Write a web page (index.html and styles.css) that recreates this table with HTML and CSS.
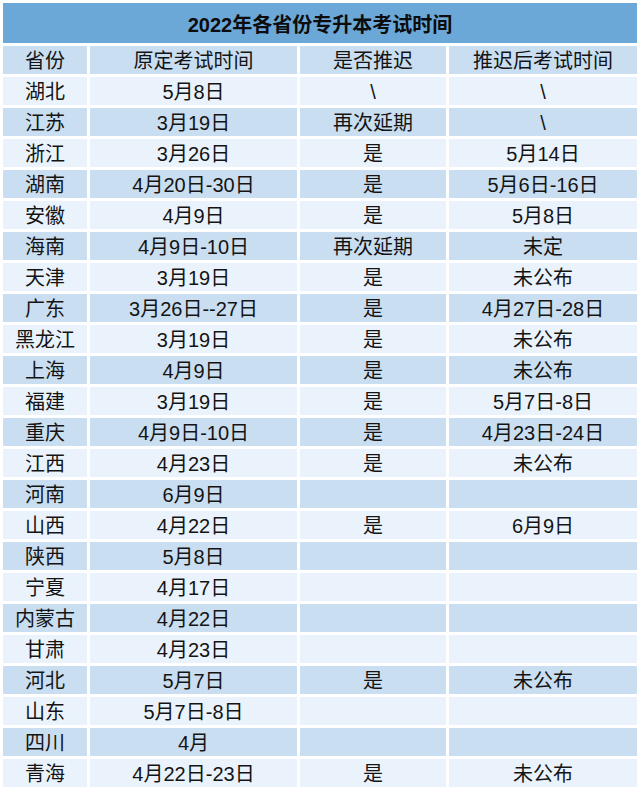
FILE: index.html
```html
<!DOCTYPE html>
<html lang="zh">
<head>
<meta charset="utf-8">
<link rel="stylesheet" href="styles.css">
</head>
<body>
<table class="exam">
  <colgroup>
    <col class="c1"><col class="c2"><col class="c3"><col class="c4">
  </colgroup>
  <tr class="title"><th colspan="4">2022年各省份专升本考试时间</th></tr>
  <tr class="head dark"><td>省份</td><td>原定考试时间</td><td>是否推迟</td><td>推迟后考试时间</td></tr>
  <tr class="light"><td>湖北</td><td>5月8日</td><td>\</td><td>\</td></tr>
  <tr class="dark"><td>江苏</td><td>3月19日</td><td>再次延期</td><td>\</td></tr>
  <tr class="light"><td>浙江</td><td>3月26日</td><td>是</td><td>5月14日</td></tr>
  <tr class="dark"><td>湖南</td><td>4月20日-30日</td><td>是</td><td>5月6日-16日</td></tr>
  <tr class="light"><td>安徽</td><td>4月9日</td><td>是</td><td>5月8日</td></tr>
  <tr class="dark"><td>海南</td><td>4月9日-10日</td><td>再次延期</td><td>未定</td></tr>
  <tr class="light"><td>天津</td><td>3月19日</td><td>是</td><td>未公布</td></tr>
  <tr class="dark"><td>广东</td><td>3月26日--27日</td><td>是</td><td>4月27日-28日</td></tr>
  <tr class="light"><td>黑龙江</td><td>3月19日</td><td>是</td><td>未公布</td></tr>
  <tr class="dark"><td>上海</td><td>4月9日</td><td>是</td><td>未公布</td></tr>
  <tr class="light"><td>福建</td><td>3月19日</td><td>是</td><td>5月7日-8日</td></tr>
  <tr class="dark"><td>重庆</td><td>4月9日-10日</td><td>是</td><td>4月23日-24日</td></tr>
  <tr class="light"><td>江西</td><td>4月23日</td><td>是</td><td>未公布</td></tr>
  <tr class="dark"><td>河南</td><td>6月9日</td><td></td><td></td></tr>
  <tr class="light"><td>山西</td><td>4月22日</td><td>是</td><td>6月9日</td></tr>
  <tr class="dark"><td>陕西</td><td>5月8日</td><td></td><td></td></tr>
  <tr class="light"><td>宁夏</td><td>4月17日</td><td></td><td></td></tr>
  <tr class="dark"><td>内蒙古</td><td>4月22日</td><td></td><td></td></tr>
  <tr class="light"><td>甘肃</td><td>4月23日</td><td></td><td></td></tr>
  <tr class="dark"><td>河北</td><td>5月7日</td><td>是</td><td>未公布</td></tr>
  <tr class="light"><td>山东</td><td>5月7日-8日</td><td></td><td></td></tr>
  <tr class="dark"><td>四川</td><td>4月</td><td></td><td></td></tr>
  <tr class="light"><td>青海</td><td>4月22日-23日</td><td>是</td><td>未公布</td></tr>
</table>
</body>
</html>
```
FILE: styles.css
```css
html, body {
  margin: 0;
  padding: 0;
  background: #ffffff;
}
.exam {
  width: 640px;
  border-collapse: separate;
  border-spacing: 3px;
  table-layout: fixed;
  font-family: "Liberation Sans", "Noto Sans CJK SC", sans-serif;
  color: #141414;
}
.c1 { width: 84px; }
.c2 { width: 207px; }
.c3 { width: 146px; }
.c4 { width: 188px; }
.exam td, .exam th {
  padding: 0;
  text-align: center;
  vertical-align: middle;
  white-space: nowrap;
  overflow: hidden;
}
.title th {
  height: 40px;
  background: #6ba7d7;
  font-size: 20px;
  font-weight: bold;
  color: #0c0c0c;
}
.exam td {
  font-size: 20px;
  line-height: 26px;
  padding-top: 2px;
  height: 26px;
}
.dark td { background: #cadef1; }
.light td { background: #eaf3fc; }
```
